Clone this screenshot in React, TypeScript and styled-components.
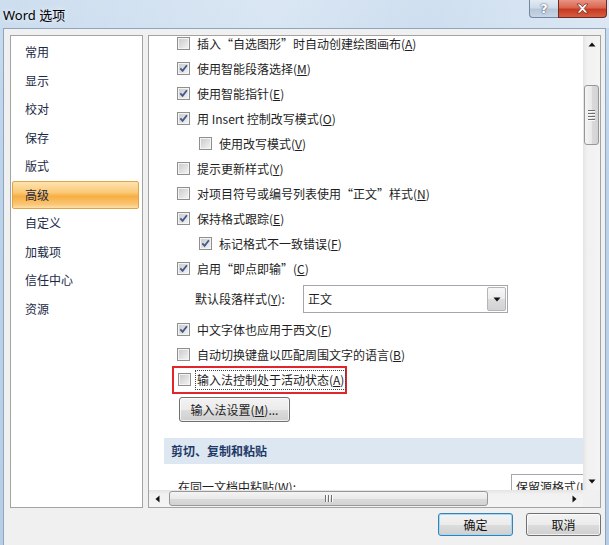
import React from 'react';
import styled, { createGlobalStyle, css } from 'styled-components';

const GlobalStyle = createGlobalStyle`
  html, body {
    margin: 0;
    padding: 0;
    background: #b9d1ea;
  }
  body {
    font-family: 'Noto Sans CJK SC', 'Noto Sans', sans-serif;
  }
`;

const Window = styled.div`
  width: 609px;
  height: 545px;
  display: flex;
  flex-direction: column;
  overflow: hidden;
  background: linear-gradient(180deg, #cadcee 0%, #bdd3ea 30%, #b7cee6 100%);
`;

const TitleBar = styled.div`
  height: 28px;
  flex: none;
  display: flex;
  justify-content: space-between;
  align-items: flex-start;
  padding: 0 2px 0 3px;
  background: linear-gradient(100deg, rgba(255, 255, 255, 0.05) 0%, rgba(255, 255, 255, 0.3) 45%, rgba(255, 255, 255, 0.1) 70%, rgba(255, 255, 255, 0.35) 100%);
`;

const Title = styled.div`
  font-family: 'Noto Sans', 'Noto Sans CJK SC', sans-serif;
  font-size: 13px;
  line-height: 27px;
  padding-top: 2px;
  color: #000;
  text-shadow: 0 0 6px rgba(255, 255, 255, 0.9);
`;

const Caption = styled.div`
  display: flex;
`;

const CaptionButton = styled.div<{ $close?: boolean }>`
  height: 18px;
  box-sizing: border-box;
  display: flex;
  align-items: center;
  justify-content: center;
  font-family: 'DejaVu Sans', sans-serif;
  font-weight: bold;
  ${(p) =>
    p.$close
      ? css`
          width: 49px;
          border: 1px solid #6e2a22;
          border-top: none;
          border-radius: 0 0 4px 0;
          background: linear-gradient(180deg, #e99384 0%, #d9664f 45%, #c63a22 55%, #d75e40 100%);
        `
      : css`
          width: 29px;
          border: 1px solid #74879e;
          border-top: none;
          border-right: none;
          border-radius: 0 0 0 4px;
          background: linear-gradient(180deg, #e3ebf4 0%, #cfdbe8 45%, #b6c7da 55%, #c7d6e6 100%);
          color: #fff;
          font-size: 13px;
          text-shadow: 0 0 1px #4d5a6a, 0 0 2px #4d5a6a;
        `}
`;

const Client = styled.div`
  flex: 1;
  margin: 0 3px;
  border: 1px solid #8ea5c0;
  border-bottom: none;
  background: #f0f0f0;
  padding: 6px 4px 0 6px;
`;

const Main = styled.div`
  display: grid;
  grid-template-columns: 133px 453px;
  column-gap: 5px;
  height: 473px;
`;

const NavList = styled.div`
  box-sizing: border-box;
  border: 1px solid #a3a3a3;
  background: #fff;
  padding-top: 2px;
`;

const NavItem = styled.div<{ $active?: boolean }>`
  box-sizing: border-box;
  height: 28.5px;
  margin: 0 3px 0 1px;
  padding-left: 12px;
  display: flex;
  align-items: center;
  font-size: 12px;
  line-height: 16px;
  color: #1a2a46;
  border: 1px solid transparent;
  border-radius: 2px;
  ${(p) =>
    p.$active &&
    css`
      border-color: #e0a448;
      background: linear-gradient(180deg, #fde3b0 0%, #fbc978 40%, #f7ae42 55%, #fac574 85%, #fddfa6 100%);
    `}
`;

const Panel = styled.div`
  box-sizing: border-box;
  border: 1px solid #a3a3a3;
  background: #fff;
  display: grid;
  grid-template-columns: 1fr 17px;
  grid-template-rows: 1fr 17px;
  overflow: hidden;
`;

const Viewport = styled.div`
  overflow: hidden;
  min-height: 0;
`;

const Content = styled.div`
  margin-top: -5px;
  font-size: 12px;
  line-height: 16px;
  color: #1e1e1e;
`;

const Row = styled.div<{ $indent?: number }>`
  height: 25px;
  display: flex;
  align-items: center;
  gap: 7px;
  padding-left: ${(p) => 28 + (p.$indent ?? 0)}px;
  white-space: nowrap;
`;

const MarkedRow = styled(Row)`
  box-sizing: border-box;
  height: 28px;
  width: fit-content;
  margin: -1.5px 0 -1.5px 23px;
  padding: 0 1px 0 4px;
  gap: 6px;
  border: 2px solid #e0262a;
`;

const FocusText = styled.span`
  outline: 1px dotted #444;
  outline-offset: 1px;
`;

const Key = styled.span`
  text-decoration: underline;
`;

const Box = styled.span`
  flex: none;
  box-sizing: border-box;
  width: 13px;
  height: 13px;
  border: 1px solid #8e8f8f;
  box-shadow: inset 0 0 0 1px #f4f4f4;
  background: linear-gradient(135deg, #c9c9c9 0%, #dcdcdc 45%, #f6f6f6 100%);
  display: flex;
  align-items: center;
  justify-content: center;
`;

const Check = ({ checked }: { checked?: boolean }) => (
  <Box>
    {checked && (
      <svg width="9" height="9" viewBox="0 0 9 9">
        <path d="M1.3 4.3 L3.6 6.9 L7.9 1.3" fill="none" stroke="#42578c" strokeWidth="1.8" />
      </svg>
    )}
  </Box>
);

const ComboRow = styled.div<{ $pad: number; $height: number }>`
  height: ${(p) => p.$height}px;
  display: flex;
  align-items: center;
  padding-left: ${(p) => p.$pad}px;
  white-space: nowrap;
`;

const ComboLabel = styled.span<{ $width: number }>`
  flex: none;
  width: ${(p) => p.$width}px;
`;

const Combo = styled.div<{ $width: number; $height: number }>`
  flex: none;
  box-sizing: border-box;
  width: ${(p) => p.$width}px;
  height: ${(p) => p.$height}px;
  border: 1px solid #a4a7ae;
  background: #fff;
  display: flex;
  align-items: center;
  justify-content: space-between;
  padding: 1px 1px 1px 4px;
`;

const DropButton = styled.div`
  box-sizing: border-box;
  width: 19px;
  height: 100%;
  border: 1px solid #b5b5b5;
  border-radius: 2px;
  background: linear-gradient(180deg, #f7f7f7 0%, #ececec 50%, #dcdcdc 51%, #d2d2d2 100%);
  display: flex;
  align-items: center;
  justify-content: center;
`;

const Arrow = ({ dir }: { dir: 'up' | 'down' | 'left' | 'right' }) => {
  const pts = {
    up: '0.5,4.5 7.5,4.5 4,0.5',
    down: '0.5,0.5 7.5,0.5 4,4.5',
    left: '4.5,0.5 4.5,7.5 0.5,4',
    right: '0.5,0.5 0.5,7.5 4.5,4',
  }[dir];
  const horiz = dir === 'left' || dir === 'right';
  return (
    <svg width={horiz ? 5 : 8} height={horiz ? 8 : 5} viewBox={horiz ? '0 0 5 8' : '0 0 8 5'}>
      <polygon points={pts} fill="#111" />
    </svg>
  );
};

const SmallButton = styled.div`
  box-sizing: border-box;
  width: 111px;
  height: 25px;
  margin: 5px 0 0 30px;
  border: 1px solid #707070;
  border-radius: 3px;
  background: linear-gradient(180deg, #f3f3f3 0%, #ebebeb 50%, #dddddd 51%, #cfcfcf 100%);
  box-shadow: inset 0 0 0 1px rgba(255, 255, 255, 0.7);
  display: flex;
  align-items: center;
  justify-content: center;
  white-space: nowrap;
`;

const SectionHeader = styled.div`
  height: 26px;
  margin: 16px 0 8px 15px;
  padding-left: 7px;
  display: flex;
  align-items: center;
  background: #dde7f1;
  font-weight: bold;
  color: #1f3a68;
`;

const VScroll = styled.div`
  display: flex;
  flex-direction: column;
  background: linear-gradient(90deg, #e4e4e4 0%, #f1f1f1 25%, #f4f4f4 100%);
`;

const HScroll = styled.div`
  display: flex;
  background: linear-gradient(180deg, #e4e4e4 0%, #f1f1f1 25%, #f4f4f4 100%);
`;

const ArrowCell = styled.div`
  flex: none;
  width: 17px;
  height: 17px;
  display: flex;
  align-items: center;
  justify-content: center;
`;

const VTrack = styled.div`
  flex: 1;
  padding-top: 32px;
`;

const HTrack = styled.div`
  flex: 1;
  padding-left: 3px;
  display: flex;
  align-items: center;
`;

const Thumb = styled.div<{ $vertical?: boolean }>`
  box-sizing: border-box;
  border: 1px solid #979797;
  border-radius: 3px;
  display: flex;
  align-items: center;
  justify-content: center;
  ${(p) =>
    p.$vertical
      ? css`
          width: 15px;
          height: 60px;
          margin-left: 1px;
          flex-direction: column;
          gap: 1px;
          background: linear-gradient(90deg, #f4f4f4 0%, #e9e9e9 50%, #dadada 51%, #d3d3d3 100%);
        `
      : css`
          width: 319px;
          height: 15px;
          gap: 1px;
          background: linear-gradient(180deg, #f4f4f4 0%, #e9e9e9 50%, #dadada 51%, #d3d3d3 100%);
        `}
`;

const Grip = styled.span<{ $vertical?: boolean }>`
  display: block;
  background: #6f6f6f;
  border: solid #fafafa;
  ${(p) =>
    p.$vertical
      ? css`
          width: 7px;
          height: 1px;
          border-width: 0 0 1px;
        `
      : css`
          width: 1px;
          height: 7px;
          border-width: 0 1px 0 0;
        `}
`;

const Corner = styled.div`
  background: #f0f0f0;
`;

const Footer = styled.div`
  display: flex;
  justify-content: flex-end;
  gap: 13px;
  margin-top: 5px;
`;

const DlgButton = styled.div<{ $default?: boolean }>`
  box-sizing: border-box;
  width: 75px;
  height: 23px;
  border: 1px solid ${(p) => (p.$default ? '#3c7fb1' : '#707070')};
  border-radius: 3px;
  background: linear-gradient(180deg, #f3f3f3 0%, #ebebeb 50%, #dddddd 51%, #cfcfcf 100%);
  box-shadow: inset 0 0 0 1px ${(p) => (p.$default ? '#9fdbf6' : 'rgba(255,255,255,0.7)')};
  display: flex;
  align-items: center;
  justify-content: center;
  font-size: 12px;
  line-height: 16px;
  color: #111;
`;

const navItems = ['常用', '显示', '校对', '保存', '版式', '高级', '自定义', '加载项', '信任中心', '资源'];

type Opt = { text: string; key: string; tail?: string; checked?: boolean; indent?: number };

const topOptions: Opt[] = [
  { text: '插入“自选图形”时自动创建绘图画布(', key: 'A', tail: ')' },
  { text: '使用智能段落选择(', key: 'M', tail: ')', checked: true },
  { text: '使用智能指针(', key: 'E', tail: ')', checked: true },
  { text: '用 Insert 控制改写模式(', key: 'O', tail: ')', checked: true },
  { text: '使用改写模式(', key: 'V', tail: ')', indent: 22 },
  { text: '提示更新样式(', key: 'Y', tail: ')' },
  { text: '对项目符号或编号列表使用“正文”样式(', key: 'N', tail: ')' },
  { text: '保持格式跟踪(', key: 'E', tail: ')', checked: true },
  { text: '标记格式不一致错误(', key: 'F', tail: ')', checked: true, indent: 22 },
  { text: '启用“即点即输”(', key: 'C', tail: ')', checked: true },
];

const midOptions: Opt[] = [
  { text: '中文字体也应用于西文(', key: 'F', tail: ')', checked: true },
  { text: '自动切换键盘以匹配周围文字的语言(', key: 'B', tail: ')' },
];

const OptionRow = ({ opt }: { opt: Opt }) => (
  <Row $indent={opt.indent}>
    <Check checked={opt.checked} />
    <span>
      {opt.text}
      <Key>{opt.key}</Key>
      {opt.tail}
    </span>
  </Row>
);

const App = () => {
  return (
    <Window>
      <GlobalStyle />
      <TitleBar>
        <Title>Word 选项</Title>
        <Caption>
          <CaptionButton>?</CaptionButton>
          <CaptionButton $close>
            <svg width="13" height="11" viewBox="0 0 13 11">
              <path
                d="M1 1 H4 L6.5 3.8 L9 1 H12 L8.2 5.5 L12 10 H9 L6.5 7.2 L4 10 H1 L4.8 5.5 Z"
                fill="#fff"
                stroke="#7a2f25"
                strokeWidth="0.8"
              />
            </svg>
          </CaptionButton>
        </Caption>
      </TitleBar>
      <Client>
        <Main>
          <NavList>
            {navItems.map((item) => (
              <NavItem key={item} $active={item === '高级'}>
                {item}
              </NavItem>
            ))}
          </NavList>
          <Panel>
            <Viewport>
              <Content>
                {topOptions.map((opt, i) => (
                  <OptionRow key={`top-${i}`} opt={opt} />
                ))}
                <ComboRow $pad={46} $height={36}>
                  <ComboLabel $width={108}>
                    默认段落样式(<Key>Y</Key>):
                  </ComboLabel>
                  <Combo $width={205} $height={28}>
                    <span>正文</span>
                    <DropButton>
                      <Arrow dir="down" />
                    </DropButton>
                  </Combo>
                </ComboRow>
                {midOptions.map((opt, i) => (
                  <OptionRow key={`mid-${i}`} opt={opt} />
                ))}
                <MarkedRow>
                  <Check />
                  <FocusText>
                    输入法控制处于活动状态(<Key>A</Key>)
                  </FocusText>
                </MarkedRow>
                <SmallButton>
                  输入法设置(<Key>M</Key>)...
                </SmallButton>
                <SectionHeader>剪切、复制和粘贴</SectionHeader>
                <ComboRow $pad={29} $height={30}>
                  <ComboLabel $width={333}>
                    在同一文档中粘贴(<Key>W</Key>):
                  </ComboLabel>
                  <Combo $width={150} $height={26}>
                    <span>保留源格式(U)</span>
                    <DropButton>
                      <Arrow dir="down" />
                    </DropButton>
                  </Combo>
                </ComboRow>
              </Content>
            </Viewport>
            <VScroll>
              <ArrowCell>
                <Arrow dir="up" />
              </ArrowCell>
              <VTrack>
                <Thumb $vertical>
                  <Grip $vertical />
                  <Grip $vertical />
                  <Grip $vertical />
                  <Grip $vertical />
                </Thumb>
              </VTrack>
              <ArrowCell>
                <Arrow dir="down" />
              </ArrowCell>
            </VScroll>
            <HScroll>
              <ArrowCell>
                <Arrow dir="left" />
              </ArrowCell>
              <HTrack>
                <Thumb>
                  <Grip />
                  <Grip />
                  <Grip />
                </Thumb>
              </HTrack>
              <ArrowCell>
                <Arrow dir="right" />
              </ArrowCell>
            </HScroll>
            <Corner />
          </Panel>
        </Main>
        <Footer>
          <DlgButton $default>确定</DlgButton>
          <DlgButton>取消</DlgButton>
        </Footer>
      </Client>
    </Window>
  );
};

export default App;
